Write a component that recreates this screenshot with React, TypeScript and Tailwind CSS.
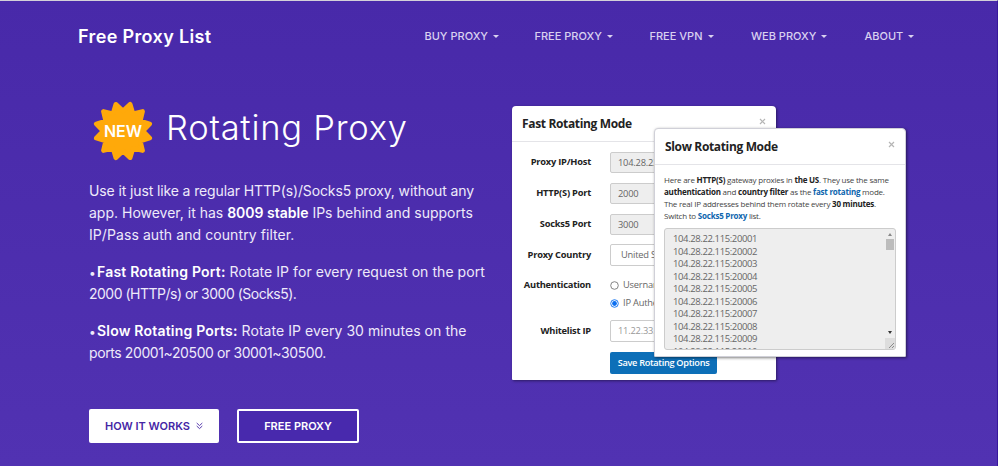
import type { ReactNode } from 'react';

const NAV_ITEMS = [
  { label: 'BUY PROXY', width: 'w-[110px]' },
  { label: 'FREE PROXY', width: 'w-[115px]' },
  { label: 'FREE VPN', width: 'w-[101.5px]' },
  { label: 'WEB PROXY', width: 'w-[113.5px]' },
  { label: 'ABOUT', width: 'w-[60px]' },
];

const PROXIES = Array.from({ length: 10 }, (_, i) => `104.28.22.115:${20001 + i}`);

// 12 tips, alternating with the inner valleys
const BURST_POINTS = Array.from({ length: 24 }, (_, i) => {
  const radius = i % 2 === 0 ? 20 : 27.7;
  const angle = (i * Math.PI) / 12;
  return `${(30 + radius * Math.sin(angle)).toFixed(2)},${(30 - radius * Math.cos(angle)).toFixed(2)}`;
}).join(' ');

function Header() {
  return (
    <header className="flex h-[70px] items-center pl-[78px]">
      <a className="w-[346.5px] text-[18px] font-semibold tracking-[0.36px] text-white">Free Proxy List</a>
      <nav className="flex">
        {NAV_ITEMS.map(item => (
          <a
            key={item.label}
            className={`flex items-center gap-[5px] text-[11px] leading-4 font-medium whitespace-nowrap text-[#d9d1f0] ${item.width}`}
          >
            {item.label}
            <span className="mt-px border-x-[3px] border-t-[3px] border-x-transparent border-t-[#d9d1f0]" />
          </a>
        ))}
      </nav>
    </header>
  );
}

function NewBadge() {
  return (
    <div className="relative h-[60px] w-[60px]">
      <svg viewBox="0 0 60 60" className="h-full w-full">
        <polygon
          points={BURST_POINTS}
          fill="#ffa90a"
          stroke="#ffa90a"
          strokeWidth="4.6"
          strokeLinejoin="round"
        />
      </svg>
      <span className="absolute inset-0 flex items-center justify-center text-[16px] font-semibold text-white">
        NEW
      </span>
    </div>
  );
}

function Line({ className = '', children }: { className?: string; children: ReactNode }) {
  return <span className={`block whitespace-nowrap ${className}`}>{children}</span>;
}

function Bullet() {
  return <span className="inline-block w-[8px] text-[12px] leading-none tracking-normal">•</span>;
}

function Intro() {
  return (
    <section className="w-[512px] pl-[89px]">
      <div className="flex items-center gap-[13px] pt-[30px] pl-[4px]">
        <NewBadge />
        <h1 className="-mt-[6px] text-[34.5px] leading-[44px] font-light tracking-[0.75px] whitespace-nowrap text-white">
          Rotating Proxy
        </h1>
      </div>

      <div className="mt-[19px] space-y-[15px] text-[14px] leading-[22px] text-[#eeeafa]">
        <p>
          <Line className="tracking-[-0.12px]">Use it just like a regular HTTP(s)/Socks5 proxy, without any</Line>
          <Line>
            app. However, it has <b className="font-semibold text-white">8009 stable</b> IPs behind and supports
          </Line>
          <Line className="tracking-[0.08px]">IP/Pass auth and country filter.</Line>
        </p>
        <p>
          <Line className="tracking-[0.06px]">
            <Bullet />
            <b className="font-semibold tracking-[0.2px] text-white">Fast Rotating Port:</b> Rotate IP for every request on the port
          </Line>
          <Line className="tracking-[-0.5px]">2000 (HTTP/s) or 3000 (Socks5).</Line>
        </p>
        <p>
          <Line className="tracking-[0.06px]">
            <Bullet />
            <b className="font-semibold tracking-[0.2px] text-white">Slow Rotating Ports:</b> Rotate IP every 30 minutes on the
          </Line>
          <Line className="tracking-[-0.4px]">ports 20001~20500 or 30001~30500.</Line>
        </p>
      </div>

      <div className="mt-[45px] flex gap-[18px] text-[11px] font-semibold">
        <button className="flex h-[34px] w-[130px] items-center justify-center gap-[6px] rounded-[2px] bg-white whitespace-nowrap text-[#4526a5]">
          HOW IT WORKS
          <svg width="7" height="8" viewBox="0 0 7 8" fill="none" stroke="currentColor" strokeWidth="0.9">
            <path d="M0.7 1 L3.5 3.6 L6.3 1 M0.7 4 L3.5 6.6 L6.3 4" />
          </svg>
        </button>
        <button className="h-[34px] w-[122px] rounded-[2px] border-2 border-white bg-[#4829ad] whitespace-nowrap text-white">
          FREE PROXY
        </button>
      </div>
    </section>
  );
}

function ModalHeader({ title, className }: { title: string; className: string }) {
  return (
    <div className={`flex items-start justify-between border-b border-[#e4e4e8] px-[10px] ${className}`}>
      <h2 className="pt-[9px] text-[12px] leading-[17px] font-bold tracking-[-0.35px] whitespace-nowrap text-[#222]">
        {title}
      </h2>
      <svg className="mt-[12px]" width="7" height="7" viewBox="0 0 7 7" stroke="#b5b5b5" strokeWidth="1.2">
        <path d="M1 1 L6 6 M6 1 L1 6" />
      </svg>
    </div>
  );
}

function Row({ label, className, children }: { label: string; className: string; children?: ReactNode }) {
  return (
    <div className={`flex items-center ${className}`}>
      <label className="w-[79px] text-right text-[9.3px] leading-3 font-bold tracking-[-0.22px] whitespace-nowrap text-[#222]">
        {label}
      </label>
      <div className="ml-[19px] flex-1">{children}</div>
    </div>
  );
}

function Radio({ checked }: { checked?: boolean }) {
  return (
    <svg width="9" height="9" viewBox="0 0 9 9" className="shrink-0">
      <circle cx="4.5" cy="4.5" r="3.8" fill="#fff" stroke={checked ? '#0b6ff0' : '#777'} strokeWidth="0.9" />
      {checked && <circle cx="4.5" cy="4.5" r="2.4" fill="#0b6ff0" />}
    </svg>
  );
}

function FastModal() {
  return (
    <div className="absolute top-0 left-0 h-[274px] w-[264px] rounded-t-[4px] rounded-b-[1px] bg-white shadow-[1px_1px_3px_rgba(0,0,0,0.45)]">
      <ModalHeader title="Fast Rotating Mode" className="h-[36px]" />
      <div className="pt-[9px] text-[9.3px] tracking-[-0.2px] text-[#666]">
        <Row label="Proxy IP/Host" className="h-[22px]">
          <div className="h-[21px] w-[140px] rounded-[2px] border border-[#ccc] bg-[#eee] pl-[7px] leading-[19px]">104.28.22.115</div>
        </Row>
        <Row label="HTTP(S) Port" className="mt-[9px] h-[22px]">
          <div className="h-[21px] w-[140px] rounded-[2px] border border-[#ccc] bg-[#eee] pl-[7px] leading-[19px]">2000</div>
        </Row>
        <Row label="Socks5 Port" className="mt-[9px] h-[22px]">
          <div className="h-[21px] w-[140px] rounded-[2px] border border-[#ccc] bg-[#eee] pl-[7px] leading-[19px]">3000</div>
        </Row>
        <Row label="Proxy Country" className="mt-[9px] h-[22px]">
          <div className="h-[22px] w-[140px] rounded-[2px] border border-[#ccc] bg-white pl-[10px] leading-[20px]">United S</div>
        </Row>
        <Row label="Authentication" className="mt-[10px] h-[18px]">
          <div className="flex items-center gap-[4px] leading-[18px]">
            <Radio />
            Usernam
          </div>
        </Row>
        <Row label="" className="h-[18px]">
          <div className="flex items-center gap-[4px] leading-[18px]">
            <Radio checked />
            IP Authe
          </div>
        </Row>
        <Row label="Whitelist IP" className="mt-[8px] h-[22px]">
          <div className="h-[22px] w-[140px] rounded-[2px] border border-[#ccc] bg-white pl-[7px] leading-[20px] text-[#999]">
            11.22.33.44
          </div>
        </Row>
        <button className="mt-[10px] ml-[98px] block h-[22px] w-[107px] rounded-[2px] bg-[#0d6fb8] text-[9.2px] font-semibold tracking-[-0.3px] whitespace-nowrap text-white">
          Save Rotating Options
        </button>
      </div>
    </div>
  );
}

function SlowModal() {
  return (
    <div className="absolute top-[22px] left-[142px] h-[229px] w-[252px] rounded-t-[4px] rounded-b-[1px] border border-[#d0d0d8] bg-white shadow-[1px_1px_3px_rgba(0,0,0,0.5)]">
      <ModalHeader title="Slow Rotating Mode" className="h-[36px]" />
      <div className="pt-[9px] pl-[9px] text-[8px] leading-[12px] tracking-[-0.22px] text-[#444]">
        <Line>
          Here are <b className="text-[#222]">HTTP(S)</b> gateway proxies in <b className="text-[#222]">the US</b>. They use the same
        </Line>
        <Line>
          <b className="text-[#222]">authentication</b> and <b className="text-[#222]">country filter</b> as the{' '}
          <b className="text-[#0d65ae]">fast rotating</b> mode.
        </Line>
        <Line>
          The real IP addresses behind them rotate every <b className="text-[#222]">30 minutes</b>.
        </Line>
        <Line>
          Switch to <b className="text-[#0d65ae]">Socks5 Proxy</b> list.
        </Line>
        <div className="mt-[6px] flex h-[122px] w-[232px] justify-between overflow-hidden rounded-[3px] border border-[#ccc] bg-[#eee]">
          <div className="pt-[4px] pl-[8px] text-[9.5px] leading-[12.55px] tracking-[-0.39px] text-[#666]">
            {PROXIES.map(proxy => (
              <div key={proxy}>{proxy}</div>
            ))}
          </div>
          <div className="flex h-full w-[10px] flex-col items-center">
            <span className="mt-[4px] border-x-[2.5px] border-b-[3px] border-x-transparent border-b-[#888]" />
            <span className="mt-[3px] h-[11px] w-[8px] bg-[#bcbcbc]" />
            <span className="mt-[81px] border-x-[2.5px] border-t-[3px] border-x-transparent border-t-[#333]" />
            <svg className="mt-auto shrink-0 bg-[#ddd]" width="10" height="11" viewBox="0 0 10 11" stroke="#777" strokeWidth="0.8">
              <path d="M4 10 L9 5 M7 10 L9 8" />
            </svg>
          </div>
        </div>
      </div>
    </div>
  );
}

export default function App() {
  return (
    <div className="h-[466px] w-[1000px] overflow-hidden bg-white pr-[2px] font-['Inter',sans-serif]">
      <div className="h-full border-t border-r border-t-[#d3d0d9] border-r-[#38189c] bg-linear-to-b from-[#4829a9] to-[#5132b2]">
        <Header />
        <main className="flex">
          <Intro />
          <div className="relative mt-[35px] h-[274px] w-[394px] font-['Open_Sans',sans-serif]">
            <FastModal />
            <SlowModal />
          </div>
        </main>
      </div>
    </div>
  );
}
